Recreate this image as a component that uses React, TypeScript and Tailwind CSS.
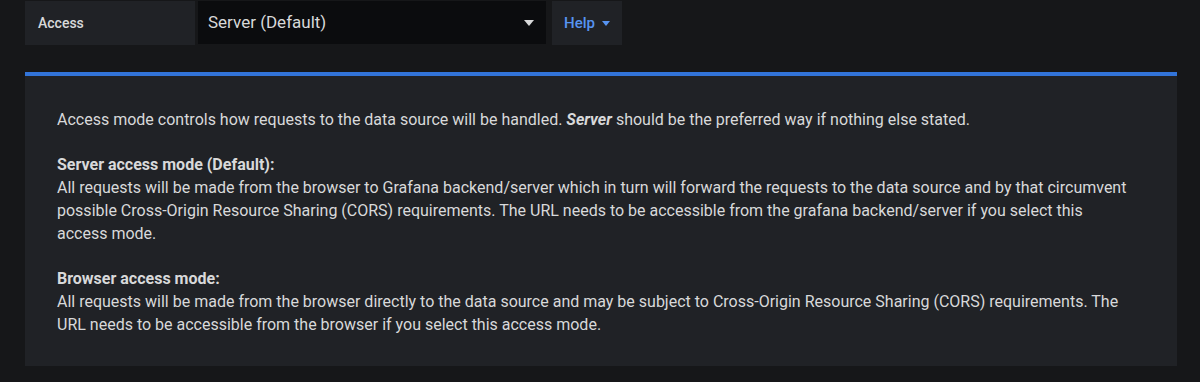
import React from "react";

export default function App() {
  return (
    <div
      className="w-[1200px] h-[382px] bg-[#161719] text-[#d8d9da] overflow-hidden"
      style={{ fontFamily: "Roboto, 'Noto Sans', sans-serif" }}
    >
      <div className="flex pt-[1px] pl-[25px] gap-[3px] h-[45px]">
        <div className="w-[170px] h-[44px] bg-[#202226] flex items-center pl-[13px] text-[14px] font-medium text-[#d8d9da]">
          Access
        </div>
        <div className="w-[348px] h-[43px] bg-[#0b0c0e] flex items-center justify-between pl-[10px] pr-[12px] text-[17px] text-[#d8d9da]">
          <span>Server (Default)</span>
          <svg width="10" height="6" viewBox="0 0 10 6">
            <path d="M0 0 L10 0 L5 6 Z" fill="#d8d9da" />
          </svg>
        </div>
        <div className="w-[70px] h-[44px] ml-[3px] bg-[#202226] flex items-center pl-[12px] gap-[7px] text-[15px] font-medium text-[#5794f2]">
          <span>Help</span>
          <svg width="8" height="5" viewBox="0 0 8 5">
            <path d="M0 0 L8 0 L4 5 Z" fill="#5794f2" />
          </svg>
        </div>
      </div>
      <div className="mt-[27px] ml-[25px] w-[1152px] h-[294px] bg-[#202226] border-t-4 border-[#3274d9] pt-[32px] pl-[32px] pr-[43px] text-[16px] leading-[23px] text-[#d8d9da]">
        <p>
          Access mode controls how requests to the data source will be handled. <em className="font-bold">Server</em> should be the preferred way if nothing else stated.
        </p>
        <p className="mt-[22px]">
          <b className="font-bold">Server access mode (Default):</b>
          <br />
          All requests will be made from the browser to Grafana backend/server which in turn will forward the requests to the data source and by that circumvent possible Cross-Origin Resource Sharing (CORS) requirements. The URL needs to be accessible from the grafana backend/server if you select this access mode.
        </p>
        <p className="mt-[22px]">
          <b className="font-bold">Browser access mode:</b>
          <br />
          All requests will be made from the browser directly to the data source and may be subject to Cross-Origin Resource Sharing (CORS) requirements. The URL needs to be accessible from the browser if you select this access mode.
        </p>
      </div>
    </div>
  );
}
